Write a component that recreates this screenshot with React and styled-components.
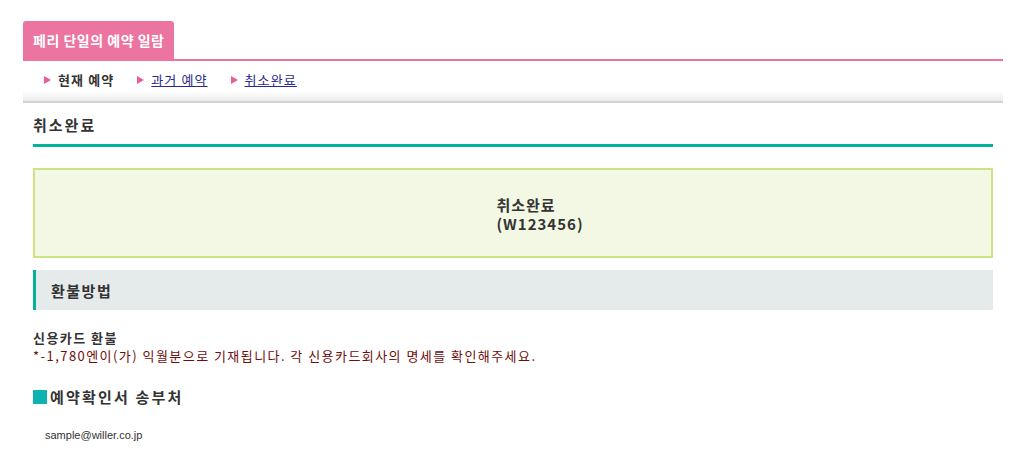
import styled, { createGlobalStyle } from "styled-components";

const GlobalStyle = createGlobalStyle`
  body {
    margin: 0;
    background: #fff;
    font-family: "Noto Sans CJK KR", "Liberation Sans", sans-serif;
    color: #333;
  }
`;

const Page = styled.div`
  width: 980px;
  margin-left: 23px;
  padding-top: 21px;
`;

const TabBar = styled.div`
  display: flex;
  border-bottom: 2px solid #eb74a0;
`;

const Tab = styled.div`
  height: 38px;
  padding: 0 10px;
  display: flex;
  align-items: center;
  background: #eb74a0;
  border-radius: 3px 3px 0 0;
  color: #fff;
  font-size: 14px;
  font-weight: bold;
  letter-spacing: 0.5px;
`;

const Nav = styled.ul`
  list-style: none;
  margin: 0;
  padding: 0 0 0 21px;
  height: 40px;
  display: flex;
  align-items: center;
  gap: 23px;
  background: linear-gradient(to bottom, #fff 0, #fff 30px, #ebebeb 40px);
  border-bottom: 2px solid #d2d2d2;
`;

const NavItem = styled.li`
  display: flex;
  align-items: center;
  gap: 7px;
  font-size: 13px;
  letter-spacing: 1.1px;
  margin-top: -3px;

  &::before {
    content: "";
    width: 0;
    height: 0;
    border-left: 7px solid #eb5a9a;
    border-top: 4px solid transparent;
    border-bottom: 4px solid transparent;
  }

  a {
    color: #2a2a8c;
    text-decoration: underline;
  }
`;

const Current = styled.span`
  color: #333;
  font-weight: bold;
`;

const Content = styled.div`
  padding: 0 10px;
`;

const PageTitle = styled.h2`
  margin: 11px 0 0;
  font-size: 15px;
  font-weight: bold;
  letter-spacing: 2px;
  line-height: 22px;
  padding-bottom: 8px;
  border-bottom: 3px solid #00b39a;
  color: #333;
`;

const ResultBox = styled.div`
  margin-top: 21px;
  height: 85px;
  border: 2px solid #cde283;
  background: #f3f8e5;
  display: flex;
  flex-direction: column;
  align-items: center;
  justify-content: center;
  font-size: 15px;
  font-weight: bold;
  letter-spacing: 1px;
  line-height: 19px;
  color: #333;
  padding: 1px 0 0 54px;
  box-sizing: content-box;
`;

const BoxLines = styled.div`
  text-align: left;
`;

const SectionBar = styled.h3`
  margin: 12px 0 0;
  height: 40px;
  display: flex;
  align-items: center;
  padding-left: 15px;
  background: #e5eaea;
  border-left: 3px solid #00b39a;
  font-size: 15px;
  font-weight: bold;
  letter-spacing: 1.5px;
  color: #333;
`;

const Refund = styled.div`
  margin-top: 19px;
  font-size: 13px;
  line-height: 18px;
  letter-spacing: 1.45px;
`;

const RefundTitle = styled.div`
  font-weight: bold;
  color: #333;
`;

const RefundNote = styled.div`
  color: #6e0e0e;
`;

const SubHeading = styled.h3`
  margin: 22px 0 0;
  display: flex;
  align-items: center;
  gap: 3px;
  font-size: 15px;
  font-weight: bold;
  letter-spacing: 2.2px;
  line-height: 20px;
  color: #333;

  &::before {
    content: "";
    width: 14px;
    height: 14px;
    background: #0db3b0;
  }
`;

const Email = styled.div`
  margin-top: 22px;
  padding-left: 12px;
  font-family: "Liberation Sans", sans-serif;
  font-size: 11px;
  color: #333;
`;

export default function App() {
  return (
    <>
      <GlobalStyle />
      <Page>
        <TabBar>
          <Tab>페리 단일의 예약 일람</Tab>
        </TabBar>
        <Nav>
          <NavItem>
            <Current>현재 예약</Current>
          </NavItem>
          <NavItem>
            <a href="#past">과거 예약</a>
          </NavItem>
          <NavItem>
            <a href="#cancel">취소완료</a>
          </NavItem>
        </Nav>
        <Content>
          <PageTitle>취소완료</PageTitle>
          <ResultBox>
            <BoxLines>
              <div>취소완료</div>
              <div>(W123456)</div>
            </BoxLines>
          </ResultBox>
          <SectionBar>환불방법</SectionBar>
          <Refund>
            <RefundTitle>신용카드 환불</RefundTitle>
            <RefundNote>
              *-1,780엔이(가) 익월분으로 기재됩니다. 각 신용카드회사의 명세를 확인해주세요.
            </RefundNote>
          </Refund>
          <SubHeading>예약확인서 송부처</SubHeading>
          <Email>sample@willer.co.jp</Email>
        </Content>
      </Page>
    </>
  );
}
